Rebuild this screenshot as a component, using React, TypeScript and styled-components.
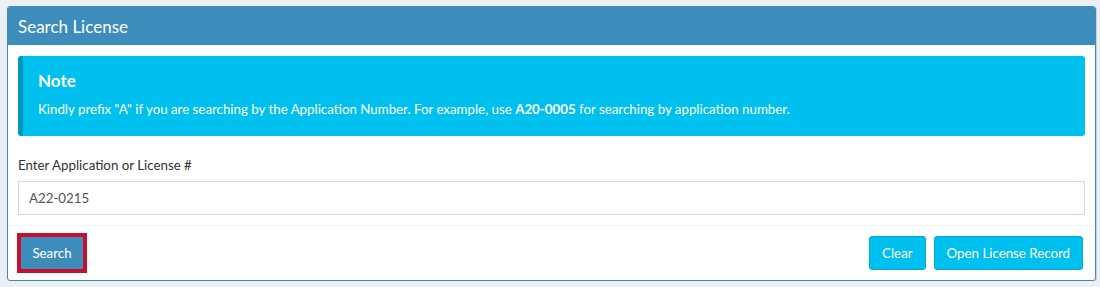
import React from "react";
import styled, { createGlobalStyle } from "styled-components";

const Global = createGlobalStyle`
  html, body { margin: 0; padding: 0; background: #ecf0f5; }
  body { font-family: "Lato", "Open Sans", sans-serif; }
  * { box-sizing: border-box; }
`;

const Page = styled.div`
  padding: 6px 5px 0 7px;
`;

const Card = styled.div`
  width: 1089px;
  background: #fff;
  border: 1px solid #3c8dbc;
  border-radius: 3px;
  box-shadow: 1px 1px 1px rgba(0, 0, 0, 0.15);
  overflow: hidden;
`;

const Header = styled.div`
  background: #3c8dbc;
  color: #fff;
  height: 38px;
  display: flex;
  align-items: center;
  padding: 0 10px;
  font-size: 17px;
`;

const Body = styled.div`
  padding: 11px 10px 10px 10px;
  display: flex;
  flex-direction: column;
`;

const Callout = styled.div`
  background: #00c0ef;
  border-left: 5px solid #0097bc;
  border-radius: 3px;
  color: #fff;
  padding: 15px 30px 14px 15px;
  height: 80px;
`;

const CalloutTitle = styled.div`
  font-weight: 700;
  font-size: 17px;
  line-height: 20px;
`;

const CalloutText = styled.div`
  margin-top: 10px;
  font-size: 13.3px;
  line-height: 16px;
`;

const Label = styled.label`
  margin-top: 21px;
  font-size: 13.3px;
  line-height: 16px;
  color: #333;
  display: block;
`;

const Input = styled.input`
  margin-top: 8px;
  height: 34px;
  width: 100%;
  border: 1px solid #d2d6de;
  padding: 0 10px;
  font-family: inherit;
  font-size: 13.3px;
  color: #555;
  outline: none;
`;

const Footer = styled.div`
  border-top: 1px solid #f4f4f4;
  padding: 10px 12px 10px 13px;
  display: flex;
  align-items: center;
  gap: 8px;
`;

const Spacer = styled.div`
  flex: 1;
`;

const Button = styled.button<{ $variant: "primary" | "info"; $focused?: boolean }>`
  height: 34px;
  padding: 0 12px;
  border-radius: 3px;
  font-family: inherit;
  font-size: 13.3px;
  color: #fff;
  cursor: pointer;
  background: ${(p) => (p.$variant === "primary" ? "#3c8dbc" : "#00c0ef")};
  border: 1px solid ${(p) => (p.$variant === "primary" ? "#367fa9" : "#00acd6")};
  ${(p) =>
    p.$focused
      ? `outline: 4px solid #c8102e; outline-offset: 0; border-radius: 0; border-color: #3c8dbc; height: 32px; width: 62px; padding: 0;`
      : ""}
`;

export default function App() {
  return (
    <>
      <Global />
      <Page>
        <Card>
          <Header>Search License</Header>
          <Body>
            <Callout>
              <CalloutTitle>Note</CalloutTitle>
              <CalloutText>
                Kindly prefix "A" if you are searching by the Application Number. For example, use{" "}
                <b>A20-0005</b> for searching by application number.
              </CalloutText>
            </Callout>
            <Label>Enter Application or License #</Label>
            <Input defaultValue="A22-0215" />
          </Body>
          <Footer>
            <Button $variant="primary" $focused>
              Search
            </Button>
            <Spacer />
            <Button $variant="info">Clear</Button>
            <Button $variant="info">Open License Record</Button>
          </Footer>
        </Card>
      </Page>
    </>
  );
}
